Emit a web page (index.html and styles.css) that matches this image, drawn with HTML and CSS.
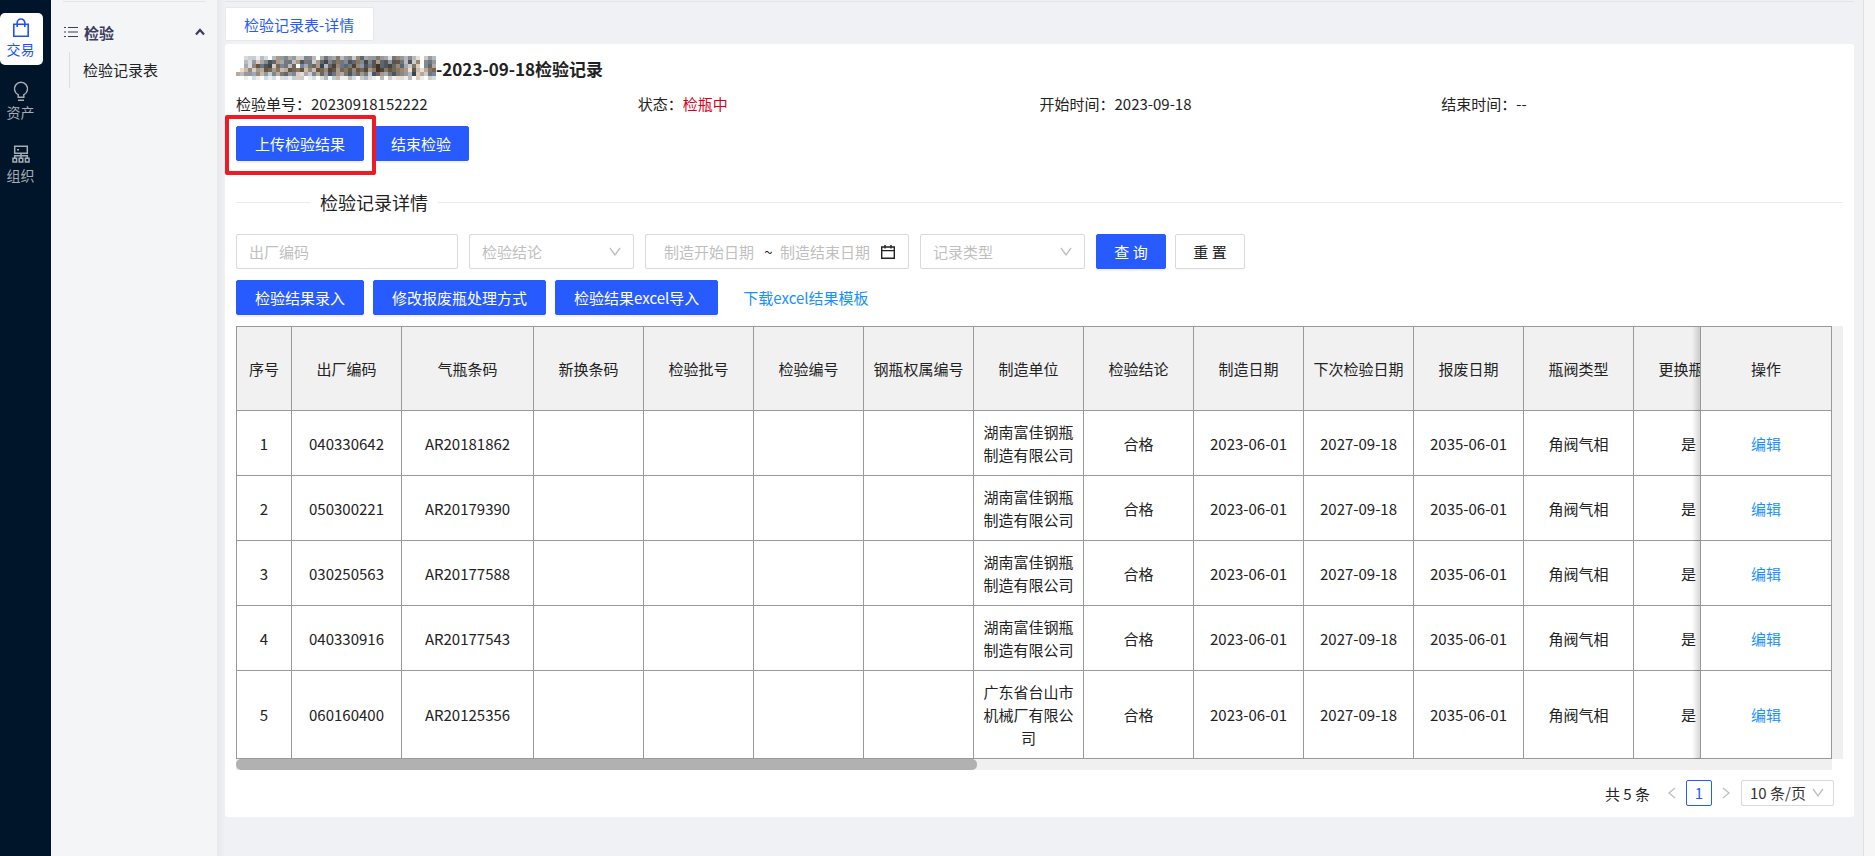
FILE: index.html
```html
<!DOCTYPE html>
<html lang="zh-CN">
<head>
<meta charset="utf-8">
<title>检验记录表-详情</title>
<link rel="stylesheet" href="styles.css">
</head>
<body>
<div class="app">
  <nav class="rail">
    <a class="rail-item active" href="#">
      <svg width="18" height="20" viewBox="0 0 18 20" fill="none" stroke="currentColor" stroke-width="1.6"><path d="M1.8 6.200h14.400v12H1.800zM5.200 9V4.600a3.800 3.600 0 0 1 7.600 0V9"/></svg>
      <span>交易</span>
    </a>
    <a class="rail-item" href="#">
      <svg width="18" height="20" viewBox="0 0 18 20" fill="none" stroke="currentColor" stroke-width="1.5"><path d="M6.200 16.300v-2.600a6.500 6.500 0 1 1 5.600 0v2.600zM6 19.200h6"/></svg>
      <span>资产</span>
    </a>
    <a class="rail-item" href="#">
      <svg width="18" height="20" viewBox="0 0 18 20" fill="none" stroke="currentColor" stroke-width="1.5"><path d="M2.700 2.200h12.600v7H2.700zM5 5.700h2M9 9.200v5M2.700 14.200v-2.400h12.600v2.400M1 14.200h3.600v3.800H1zM7.200 14.200h3.600v3.800H7.200zM13.400 14.200H17v3.800h-3.600z"/></svg>
      <span>组织</span>
    </a>
  </nav>
  <aside class="submenu">
    <button class="group" type="button">
      <svg width="14" height="12" viewBox="0 0 14 12" fill="none" stroke="currentColor" stroke-width="1.200"><path d="M4 1.500h10M4 6h10M4 10.500h10M0 1.500h2M0 6h2M0 10.500h2"/></svg>
      <span>检验</span>
      <svg class="caret" width="10" height="8" viewBox="0 0 10 8" fill="none" stroke="currentColor" stroke-width="2.200"><path d="M1 6.500l4-4.500 4 4.500"/></svg>
    </button>
    <div class="group-list"><a href="#">检验记录表</a></div>
  </aside>
  <main class="main">
    <div class="tabs"><a class="tab" href="#">检验记录表-详情</a></div>
    <section class="card">
      <h1 class="title"><svg class="mosaic" id="mosaic" width="200" height="24" viewBox="0 0 200 24" role="img" aria-label="已隐藏"></svg><span>-2023-09-18检验记录</span></h1>
      <div class="info">
        <div>检验单号：20230918152222</div>
        <div>状态：<span class="danger">检瓶中</span></div>
        <div>开始时间：2023-09-18</div>
        <div>结束时间：--</div>
      </div>
      <div class="row top-actions">
        <button class="btn primary marked" type="button">上传检验结果</button>
        <button class="btn primary" type="button">结束检验</button>
      </div>
      <h2 class="divider"><span>检验记录详情</span></h2>
      <form class="filters">
        <input class="field code" type="text" placeholder="出厂编码" aria-label="出厂编码">
        <div class="select-wrap"><select class="field" aria-label="检验结论"><option>检验结论</option></select>
          <svg class="down" width="14" height="10" viewBox="0 0 14 10"><path d="M2 1l5 7 5-7"/></svg></div>
        <div class="field range">
          <input type="text" placeholder="制造开始日期" aria-label="制造开始日期"><span>~</span><input type="text" placeholder="制造结束日期" aria-label="制造结束日期">
          <svg width="16" height="16" viewBox="0 0 16 16" fill="none" stroke="currentColor" stroke-width="1.400"><path d="M1.700 3h12.600v11.300H1.700zM1.700 6.600h12.600M5 1v3.500M11 1v3.500"/></svg>
        </div>
        <div class="select-wrap"><select class="field" aria-label="记录类型"><option>记录类型</option></select>
          <svg class="down" width="14" height="10" viewBox="0 0 14 10"><path d="M2 1l5 7 5-7"/></svg></div>
        <div class="row">
          <button class="btn primary short" type="button">查 询</button>
          <button class="btn short" type="button">重 置</button>
        </div>
      </form>
      <div class="row actions">
        <button class="btn primary" type="button">检验结果录入</button>
        <button class="btn primary" type="button">修改报废瓶处理方式</button>
        <button class="btn primary" type="button">检验结果excel导入</button>
        <a class="link download" href="#">下载excel结果模板</a>
      </div>
      <div class="table-area">
        <div class="table-scroll">
          <table>
            <colgroup><col class="c-no"><col class="c"><col class="c-wide"><col class="c"><col class="c"><col class="c"><col class="c"><col class="c"><col class="c"><col class="c"><col class="c"><col class="c"><col class="c"><col class="c"><col class="c-wide"></colgroup>
            <thead><tr><th class="fix1">序号</th><th class="fix2">出厂编码</th><th>气瓶条码</th><th>新换条码</th><th>检验批号</th><th>检验编号</th><th>钢瓶权属编号</th><th>制造单位</th><th>检验结论</th><th>制造日期</th><th>下次检验日期</th><th>报废日期</th><th>瓶阀类型</th><th>更换瓶阀</th><th class="fix-end">操作</th></tr></thead>
            <tbody>
              <tr><td class="fix1">1</td><td class="fix2">040330642</td><td>AR20181862</td><td></td><td></td><td></td><td></td><td>湖南富佳钢瓶制造有限公司</td><td>合格</td><td>2023-06-01</td><td>2027-09-18</td><td>2035-06-01</td><td>角阀气相</td><td>是</td><td class="fix-end"><a class="link" href="#">编辑</a></td></tr>
              <tr><td class="fix1">2</td><td class="fix2">050300221</td><td>AR20179390</td><td></td><td></td><td></td><td></td><td>湖南富佳钢瓶制造有限公司</td><td>合格</td><td>2023-06-01</td><td>2027-09-18</td><td>2035-06-01</td><td>角阀气相</td><td>是</td><td class="fix-end"><a class="link" href="#">编辑</a></td></tr>
              <tr><td class="fix1">3</td><td class="fix2">030250563</td><td>AR20177588</td><td></td><td></td><td></td><td></td><td>湖南富佳钢瓶制造有限公司</td><td>合格</td><td>2023-06-01</td><td>2027-09-18</td><td>2035-06-01</td><td>角阀气相</td><td>是</td><td class="fix-end"><a class="link" href="#">编辑</a></td></tr>
              <tr><td class="fix1">4</td><td class="fix2">040330916</td><td>AR20177543</td><td></td><td></td><td></td><td></td><td>湖南富佳钢瓶制造有限公司</td><td>合格</td><td>2023-06-01</td><td>2027-09-18</td><td>2035-06-01</td><td>角阀气相</td><td>是</td><td class="fix-end"><a class="link" href="#">编辑</a></td></tr>
              <tr><td class="fix1">5</td><td class="fix2">060160400</td><td>AR20125356</td><td></td><td></td><td></td><td></td><td>广东省台山市机械厂有限公司</td><td>合格</td><td>2023-06-01</td><td>2027-09-18</td><td>2035-06-01</td><td>角阀气相</td><td>是</td><td class="fix-end"><a class="link" href="#">编辑</a></td></tr>
            </tbody>
          </table>
        </div>
        <div class="v-track"></div>
        <div class="h-track"><div class="thumb"></div></div>
      </div>
      <div class="pager">
        <span class="total">共 5 条</span>
        <button class="arrow" type="button" aria-label="上一页"><svg width="8" height="12" viewBox="0 0 8 12"><path d="M7 1L1 6l6 5"/></svg></button>
        <button class="page" type="button">1</button>
        <button class="arrow" type="button" aria-label="下一页"><svg width="8" height="12" viewBox="0 0 8 12"><path d="M1 1l6 5-6 5"/></svg></button>
        <div class="select-wrap size"><select class="field" aria-label="每页条数"><option>10 条/页</option></select>
          <svg class="down" width="14" height="10" viewBox="0 0 14 10"><path d="M2 1l5 7 5-7"/></svg></div>
      </div>
    </section>
  </main>
  <div class="gutter"></div>
</div>
<script src="mosaic.js"></script>
</body>
</html>
```
FILE: styles.css
```css
* { box-sizing: border-box; }
body { margin: 0; font: 15px/23px "Noto Sans CJK SC", sans-serif; color: #222; background: #f0f1f5; }
a { text-decoration: none; color: inherit; }
button, input, select { font: inherit; color: inherit; margin: 0; }
svg { flex: none; }
.app { display: flex; min-height: 100vh; }

.rail { width: 51px; flex: none; background: #001529; padding-top: 13px; display: flex; flex-direction: column; gap: 11px; }
.rail-item { width: 43px; height: 52px; display: flex; flex-direction: column; align-items: center; padding: 5px 2px 0 0; font-size: 14px; line-height: 22px; color: #a6adb4; border-radius: 5px; }
.rail-item.active { background: #fff; color: #1e50ff; }

.submenu { width: 166px; flex: none; background: #f4f5f7; padding: 1px 11px 0 12px; }
.group { display: flex; align-items: center; gap: 6px; width: 100%; height: 51px; padding: 10px 1px 0; border: 0; border-top: 1px solid #e3e4e8; background: none; font-weight: 700; color: #3c3c5e; text-align: left; }
.group .caret { margin-left: auto; }
.group-list { margin-left: 6px; border-left: 1px solid #dcdee6; padding: 6px 0 7px 13px; }
.group-list a { display: block; }

.main { flex: 1; min-width: 0; padding: 1px 9px 0 8px; background: linear-gradient(to right, #e6e8ec, #f0f1f5 8px); }
.tabs { border-top: 1px solid #e3e4e8; padding-top: 5px; display: flex; }
.tab { height: 34px; padding: 5px 19px 5px 18px; background: #fff; border: 1px solid #e8e8e8; border-radius: 2px; color: #275bff; }
.card { margin-top: 3px; background: #fff; border-radius: 3px; padding: 11px 11px 11px; }
.title { margin: 0; display: flex; align-items: center; height: 26px; font-size: 17px; font-weight: 700; }
.info { display: grid; grid-template-columns: repeat(4, 1fr); margin-top: 11px; }
.danger { color: #d9001b; }
.row { display: flex; gap: 9px; align-items: center; }
.top-actions { margin-top: 11px; }
.btn { height: 35px; padding: 0 17px; border: 1px solid #d9d9d9; border-radius: 2px; background: #fff; white-space: nowrap; box-shadow: 0 2px 0 rgba(0, 0, 0, .02); }
.btn.primary { background: #275bff; border-color: #275bff; color: #fff; box-shadow: 0 2px 0 rgba(0, 0, 0, .05); }
.btn.short { width: 70px; padding: 0; }
.marked { position: relative; }
.marked::after { content: ""; position: absolute; inset: -12px -13px -15px -12px; border: 4px solid #ed1c24; border-radius: 2px; z-index: 2; }
.divider { display: flex; align-items: center; gap: 10px; margin: 29px 0 19px; font-size: 18px; line-height: 25px; font-weight: 400; }
.divider::before, .divider::after { content: ""; height: 1px; background: #ebebeb; }
.divider::before { width: 74px; }
.divider::after { flex: 1; }

.filters { display: flex; gap: 11px; }
.field { height: 35px; border: 1px solid #d9d9d9; border-radius: 2px; background: #fff; padding: 0 12px; outline: none; }
.code { width: 222px; }
::placeholder { color: #bfbfbf; opacity: 1; }
.select-wrap { width: 165px; position: relative; }
.select-wrap select { width: 100%; appearance: none; color: #bfbfbf; }
.down { position: absolute; right: 12px; top: 50%; margin-top: -5px; pointer-events: none; fill: none; stroke: #bfbfbf; stroke-width: 1.3; }
.range { width: 264px; display: flex; align-items: center; padding: 0 12px 0 18px; }
.range input { border: 0; outline: 0; padding: 0; width: 93px; background: none; }
.range span { width: 23px; text-align: center; }
.range svg { margin-left: auto; }
.actions { margin-top: 11px; }
.actions .btn, .marked { padding: 0 18px; }
.link { color: #1890ff; }
.download { margin-left: 16px; }

.table-area { margin-top: 11px; display: grid; grid-template-columns: 1fr 11px; }
.table-scroll { overflow: hidden; border-left: 1px solid #999; border-top: 1px solid #999; }
table { width: 1639px; table-layout: fixed; border-collapse: separate; border-spacing: 0; }
.c-no { width: 55px; }
.c { width: 110px; }
.c-wide { width: 132px; }
th, td { border-right: 1px solid #999; border-bottom: 1px solid #999; padding: 9px 8px; text-align: center; font-weight: 400; background: #fff; }
th { height: 84px; background: #f1f1f1; }
.fix1, .fix2, .fix-end { position: sticky; z-index: 1; }
.fix1 { left: 0; }
.fix2 { left: 55px; }
.fix-end { right: 0; border-left: 1px solid #999; }
.fix-end::before { content: ""; position: absolute; top: 0; bottom: -1px; left: -9px; width: 8px; background: linear-gradient(to left, rgba(0, 0, 0, .16), rgba(0, 0, 0, 0)); }
.v-track { background: #f0f0f0; }
.h-track { height: 11px; background: #f0f0f0; }
.thumb { width: 46.4%; height: 100%; background: #b1b1b1; border-radius: 5px; }

.pager { display: flex; justify-content: flex-end; align-items: center; margin-top: 10px; padding-right: 9px; }
.total { margin-right: 8px; }
.arrow { width: 28px; height: 26px; border: 0; padding: 0; background: none; display: flex; align-items: center; justify-content: center; }
.arrow svg { fill: none; stroke: #bfbfbf; stroke-width: 1.3; }
.page { width: 26px; height: 26px; padding: 0; border: 1px solid #275bff; border-radius: 2px; background: #fff; color: #275bff; line-height: 22px; }
.size { width: 93px; margin-left: 1px; }
.size select { height: 26px; padding: 0 8px; color: #333; line-height: 22px; display: block; }
.size .down { right: 9px; }
.gutter { width: 12px; flex: none; background: #f6f6f6; border-left: 1px solid #e0e0e0; }
```
FILE: mosaic.js
```js
const rows = [
  "ffdccebdfb998a9cc88bfa79a7b98c86a9979ad789b8bdfc9b",
  "ffbd9ca8569a77b9577c9648677856784859659557b5c8f879",
  "ffad85754c687b6f8a7694b6487674895753654686ac7cf86a",
  "fdb8c9a5697ba5675b8b56845967585649734756789d5bda76",
  "ab99a8b9c8a7698cdac8a69579a758697c569a75789b4cac78",
  "ffefdefdedfddecccfedfdbfcbeebdfcbdefbfceddebfcefcd"
];
const svg = document.getElementById("mosaic");
rows.forEach((row, y) => {
  [...row].forEach((c, x) => {
    const v = parseInt(c, 16) * 17;
    const tint = v > 235 ? 0 : ((x * 7 + y * 5 + x * y) % 5 - 2) * 8;
    const r = document.createElementNS("http://www.w3.org/2000/svg", "rect");
    r.setAttribute("x", x * 4);
    r.setAttribute("y", y * 4);
    r.setAttribute("width", 4);
    r.setAttribute("height", 4);
    r.setAttribute("fill", `rgb(${v - tint},${v},${v + tint})`);
    svg.appendChild(r);
  });
});
```
